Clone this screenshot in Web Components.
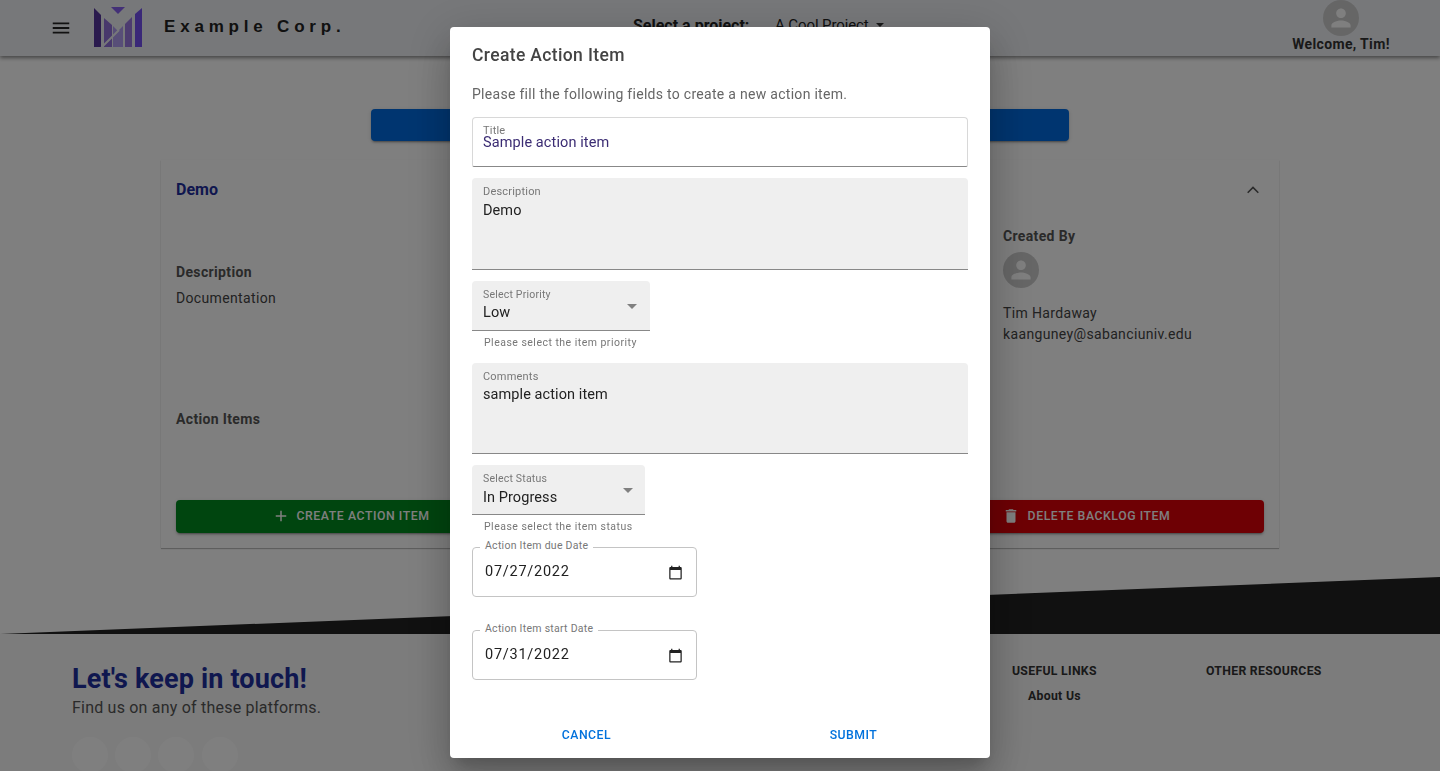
<!doctype html>
<html>
<head>
<meta charset="utf-8">
<title>Create Action Item</title>
<style>
  html, body { height: 100%; margin: 0; overflow: hidden; }
  body { background: #fff; font-family: Roboto, "Liberation Sans", sans-serif; color: #222; }
</style>
</head>
<body>
<app-header></app-header>
<backlog-page>
  <backlog-card></backlog-card>
</backlog-page>
<app-footer></app-footer>
<action-dialog>
  <text-field outlined label="Title" value="Sample action item" height="50"></text-field>
  <text-field label="Description" value="Demo" height="92" style="--gap: 3px"></text-field>
  <select-field label="Select Priority" value="Low" helper="Please select the item priority" width="178"></select-field>
  <text-field label="Comments" value="sample action item" height="91"></text-field>
  <select-field label="Select Status" value="In Progress" helper="Please select the item status" width="173" style="--gap: 3px; --arrow: 12px"></select-field>
  <date-field label="Action Item due Date" value="07/27/2022"></date-field>
  <date-field label="Action Item start Date" value="07/31/2022"></date-field>
</action-dialog>

<script>
const PERSON = 'M12 12c2.21 0 4-1.79 4-4s-1.79-4-4-4-4 1.79-4 4 1.79 4 4 4zm0 2c-2.67 0-8 1.34-8 4v2h16v-2c0-2.66-5.33-4-8-4z'

const tpl = html => {
  const $t = document.createElement('template')
  $t.innerHTML = html
  return $t
}

class Base extends HTMLElement {
  constructor () {
    super()
    this.attachShadow({ mode: 'open' })
      .appendChild(this.constructor.template.content.cloneNode(true))
  }
  fill (id, attr) {
    this.shadowRoot.querySelector('#' + id).textContent = this.getAttribute(attr)
  }
}

class UserAvatar extends Base {
  static template = tpl(`<style>
    :host { display: block; width: 36px; height: 36px; border-radius: 50%; background: #cdcdcd; }
    svg { display: block; width: 36px; height: 36px; fill: #fff; }
  </style>
  <svg viewBox="-3 -3 30 30"><path d="${PERSON}"/></svg>`)
}

class AppHeader extends Base {
  static template = tpl(`<style>
    :host {
      display: flex; align-items: center; height: 56px; box-sizing: border-box;
      background: #eff1f5; box-shadow: 0 2px 4px rgba(0,0,0,.45);
      position: relative; padding-left: 50px;
    }
    .menu { width: 22px; height: 22px; fill: #222; margin: -1px 22px 0 0; }
    .logo { width: 48px; height: 40px; margin-top: -2px; margin-right: 22px; }
    .brand { font: 700 17px "Liberation Sans", sans-serif; letter-spacing: 4.8px; color: #222; width: 469px; margin-top: -2px; }
    .project { display: flex; align-items: center; width: 659px; font-size: 15px; margin-top: -6px; color: #222; }
    .project b { font-size: 16px; font-weight: 700; width: 142px; }
    .project span { letter-spacing: -.1px; }
    .caret { width: 0; height: 0; border: 4px solid transparent; border-top-color: #333; border-bottom: 0; margin-left: 7px; }
    .user { display: flex; flex-direction: column; align-items: center; width: 100px; align-self: flex-start; margin-left: -1px; }
    .user span { font-size: 14px; font-weight: 700; line-height: 16px; letter-spacing: .35px; white-space: nowrap; color: #333; }
  </style>
  <svg class="menu" viewBox="0 0 24 24"><path d="M3 18h18v-2H3v2zm0-5h18v-2H3v2zm0-7v2h18V6H3z"/></svg>
  <svg class="logo" viewBox="0 0 48 40">
    <polygon points="17,0 31,0 24,7" fill="#8660ee"/>
    <polygon points="0,1 7,8 7,40 0,40" fill="#54349c"/>
    <polygon points="10,11 18,18 18,40 10,40" fill="#9070d8"/>
    <polygon points="19,19 24,24 29,19 29,40 19,40" fill="#b09cf0"/>
    <polygon points="31,17 38,10 38,40 31,40" fill="#9a78e0"/>
    <polygon points="41,7 48,1 48,40 41,40" fill="#7450f0"/>
    <line x1="7" y1="41" x2="25" y2="23" stroke="#eff1f5" stroke-width="2"/>
  </svg>
  <span class="brand">Example Corp.</span>
  <div class="project"><b>Select a project:</b><span>A Cool Project</span><i class="caret"></i></div>
  <div class="user"><user-avatar></user-avatar><span>Welcome, Tim!</span></div>`)
}

class BacklogPage extends Base {
  static template = tpl(`<style>
    :host { display: flex; flex-direction: column; align-items: center; padding-top: 53px; }
    .primary {
      width: 698px; height: 32px; background: #006be0; border-radius: 4px;
      box-shadow: 0 3px 1px -2px rgba(0,0,0,.2), 0 2px 2px rgba(0,0,0,.14), 0 1px 5px rgba(0,0,0,.12);
      margin-bottom: 19px;
    }
  </style>
  <div class="primary"></div>
  <slot></slot>`)
}

class BacklogCard extends Base {
  static template = tpl(`<style>
    :host {
      display: block; width: 1118px; height: 388px; box-sizing: border-box; padding: 0 15px;
      background: #fff; font-size: 14px; letter-spacing: .35px;
      box-shadow: 0 1px 1px rgba(0,0,0,.25), 0 0 1px rgba(0,0,0,.07);
    }
    .head { display: flex; justify-content: space-between; align-items: center; height: 58px; }
    .head b { font-size: 16px; font-weight: 700; color: #1f2f9e; letter-spacing: 0; margin-top: 1px; }
    .head svg { width: 24px; height: 24px; fill: none; stroke: #555; stroke-width: 1.6; margin-right: -1px; margin-top: 1px; }
    .info { display: grid; grid-template-columns: 827px 1fr; height: 282px; }
    h4 { margin: 0; font-size: 14px; font-weight: 700; line-height: 16px; color: #555; }
    .left h4 { margin-top: 46px; }
    .left p { margin: 10px 0 0; line-height: 16px; color: #444; }
    .left h4.items { margin-top: 105px; }
    .right { padding-top: 10px; }
    .right user-avatar { margin: 8px 0 15px; }
    .right p { margin: 0; line-height: 21px; color: #444; }
    .actions { display: grid; grid-template-columns: repeat(3, 1fr); gap: 16px; }
    .btn {
      display: flex; align-items: center; justify-content: center; gap: 8px; height: 33px; border-radius: 4px;
      color: #fff; font-size: 12.25px; font-weight: 500; letter-spacing: .57px; padding-bottom: 2px; box-sizing: border-box;
      box-shadow: 0 3px 1px -2px rgba(0,0,0,.2), 0 2px 2px rgba(0,0,0,.14), 0 1px 5px rgba(0,0,0,.12);
    }
    .btn svg { width: 18px; height: 18px; fill: #fff; margin-top: 1px; }
    .green { background: #008a1e; gap: 6px; padding-right: 2px; }
    .red { background: #dc0008; grid-column: 3; padding-right: 4px; }
  </style>
  <div class="head"><b>Demo</b><svg viewBox="0 0 24 24"><path d="M6.7 14.7 12 9.4l5.3 5.3"/></svg></div>
  <div class="info">
    <div class="left">
      <h4>Description</h4>
      <p>Documentation</p>
      <h4 class="items">Action Items</h4>
    </div>
    <div class="right">
      <h4>Created By</h4>
      <user-avatar></user-avatar>
      <p>Tim Hardaway</p>
      <p>kaanguney@sabanciuniv.edu</p>
    </div>
  </div>
  <div class="actions">
    <div class="btn green"><svg viewBox="0 0 24 24"><path d="M19 13h-6v6h-2v-6H5v-2h6V5h2v6h6v2z"/></svg>CREATE ACTION ITEM</div>
    <div class="btn red"><svg viewBox="0 0 24 24"><path d="M6 19c0 1.1.9 2 2 2h8c1.1 0 2-.9 2-2V7H6v12zM19 4h-3.5l-1-1h-5l-1 1H5v2h14V4z"/></svg>DELETE BACKLOG ITEM</div>
  </div>`)
}

class AppFooter extends Base {
  static template = tpl(`<style>
    :host { display: block; margin-top: 29px; }
    .wedge { height: 57px; background: #222; clip-path: polygon(0 100%, 100% 0, 100% 100%); }
    .body { display: flex; background: #f8f8f8; height: 137px; overflow: hidden; padding: 28px 0 0 72px; box-sizing: border-box; }
    .touch { width: 940px; }
    h2 { margin: 1px 0 0; font-size: 27px; font-weight: 700; line-height: 32px; letter-spacing: .15px; color: #1f2f9e; }
    .touch p { margin: 1px 0 0; font-size: 16px; line-height: 24px; letter-spacing: .21px; color: #555; }
    .social { display: flex; gap: 7px; margin-top: 17px; }
    .social i { width: 36px; height: 36px; border-radius: 50%; background: #fff; box-shadow: 0 0 20px rgba(255,255,255,.35); }
    .social i:last-child { margin-left: 1px; }
    .col { font-size: 12.25px; font-weight: 700; color: #333; padding-top: 2px; line-height: 14px; letter-spacing: .3px; }
    .links { width: 194px; }
    .links a { display: block; margin: 11px 0 0 16px; color: #333; }
  </style>
  <div class="wedge"></div>
  <div class="body">
    <div class="touch">
      <h2>Let's keep in touch!</h2>
      <p>Find us on any of these platforms.</p>
      <div class="social"><i></i><i></i><i></i><i></i></div>
    </div>
    <div class="col links">USEFUL LINKS<a>About Us</a></div>
    <div class="col">OTHER RESOURCES</div>
  </div>`)
}

class TextField extends Base {
  static template = tpl(`<style>
    :host {
      display: block; box-sizing: border-box; padding: 7px 11px 0; border-radius: 4px 4px 0 0;
      background: #efefef; border-bottom: 1px solid #888;
    }
    :host([outlined]) {
      background: #fff; border: 1px solid #d8d8d8; border-bottom-color: #888; padding: 7px 10px 0; border-radius: 4px 4px 2px 2px;
    }
    label { display: block; font-size: 11px; line-height: 13px; color: #777; letter-spacing: .2px; }
    div { font-size: 14.5px; line-height: 20px; letter-spacing: .08px; color: #222; margin-top: var(--gap, 2px); }
    :host([outlined]) label { line-height: 11px; }
    :host([outlined]) div { color: #3b2c73; margin-top: 0; line-height: 14px; letter-spacing: .1px; }
  </style>
  <label id="l"></label><div id="v"></div>`)
  connectedCallback () {
    this.fill('l', 'label')
    this.fill('v', 'value')
    this.style.height = this.getAttribute('height') + 'px'
  }
}

class SelectField extends Base {
  static template = tpl(`<style>
    :host { display: block; }
    .box {
      position: relative; height: 50px; box-sizing: border-box; padding: 7px 11px 0; background: #efefef;
      border-radius: 4px 4px 0 0; border-bottom: 1px solid #888;
    }
    label { display: block; font-size: 10.5px; line-height: 13px; color: #777; letter-spacing: .2px; }
    .val { font-size: 14.5px; line-height: 20px; letter-spacing: .08px; color: #222; margin-top: var(--gap, 2px); }
    .arrow {
      position: absolute; right: var(--arrow, 13px); top: 23px; width: 0; height: 0;
      border: 5px solid transparent; border-top-color: #808080; border-bottom: 0;
    }
    p { margin: 5px 0 0; padding-left: 12px; font-size: 10.5px; line-height: 13px; letter-spacing: .48px; color: #777; }
  </style>
  <div class="box"><label id="l"></label><div class="val" id="v"></div><i class="arrow"></i></div>
  <p id="h"></p>`)
  connectedCallback () {
    this.fill('l', 'label')
    this.fill('v', 'value')
    this.fill('h', 'helper')
    this.style.width = this.getAttribute('width') + 'px'
  }
}

class DateField extends Base {
  static template = tpl(`<style>
    :host {
      position: relative; display: flex; align-items: center; justify-content: space-between;
      width: 225px; height: 50px; box-sizing: border-box; padding: 0 14px 2px 12px;
      border: 1px solid #c4c4c4; border-radius: 4px;
    }
    legend {
      position: absolute; left: 7px; top: -9px; padding: 0 5px; background: #fff;
      font-size: 10.5px; line-height: 13px; letter-spacing: .27px; color: #777; white-space: nowrap;
    }
    span { font-size: 14.5px; letter-spacing: .75px; color: #222; }
    svg { width: 15px; height: 15px; fill: #222; margin-top: 2px; margin-right: -1px; }
  </style>
  <legend id="l"></legend>
  <span id="v"></span>
  <svg viewBox="0 0 24 24"><path d="M20 3h-1V1h-2v2H7V1H5v2H4c-1.1 0-2 .9-2 2v16c0 1.1.9 2 2 2h16c1.1 0 2-.9 2-2V5c0-1.1-.9-2-2-2zm0 18H4V8h16v13z"/></svg>`)
  connectedCallback () {
    this.fill('l', 'label')
    this.fill('v', 'value')
  }
}

class ActionDialog extends Base {
  static template = tpl(`<style>
    :host {
      position: fixed; inset: 0; display: flex; justify-content: center; align-items: flex-start;
      padding-top: 27px; box-sizing: border-box; background: rgba(0,0,0,.5);
    }
    .paper {
      width: 540px; height: 731px; box-sizing: border-box; padding: 0 22px; background: #fff; border-radius: 4px;
      display: flex; flex-direction: column;
      box-shadow: 0 11px 15px -7px rgba(0,0,0,.2), 0 24px 38px 3px rgba(0,0,0,.14), 0 9px 46px 8px rgba(0,0,0,.12);
    }
    h2 { margin: 18px 0 0; font-size: 17.5px; line-height: 21px; font-weight: 500; letter-spacing: .36px; color: #444; }
    p { margin: 18px 0 13px; font-size: 14px; line-height: 20px; letter-spacing: .29px; color: #666; }
    .fields { display: flex; flex-direction: column; flex: 1; }
    ::slotted(*) { margin-bottom: 11px; }
    ::slotted(date-field) { margin-bottom: 33px; }
    ::slotted(select-field) { margin-bottom: 14px; }
    .actions { display: flex; gap: 202px; margin: 0 -22px; padding: 0 0 15px 104px; }
    .actions span {
      display: block; width: 65px; text-align: center; font-size: 12.25px; font-weight: 500; line-height: 16px;
      letter-spacing: .5px; color: #0071dc;
    }
  </style>
  <div class="paper">
    <h2>Create Action Item</h2>
    <p>Please fill the following fields to create a new action item.</p>
    <div class="fields"><slot></slot></div>
    <div class="actions"><span>CANCEL</span><span>SUBMIT</span></div>
  </div>`)
}

customElements.define('user-avatar', UserAvatar)
customElements.define('app-header', AppHeader)
customElements.define('backlog-page', BacklogPage)
customElements.define('backlog-card', BacklogCard)
customElements.define('app-footer', AppFooter)
customElements.define('text-field', TextField)
customElements.define('select-field', SelectField)
customElements.define('date-field', DateField)
customElements.define('action-dialog', ActionDialog)
</script>
</body>
</html>
